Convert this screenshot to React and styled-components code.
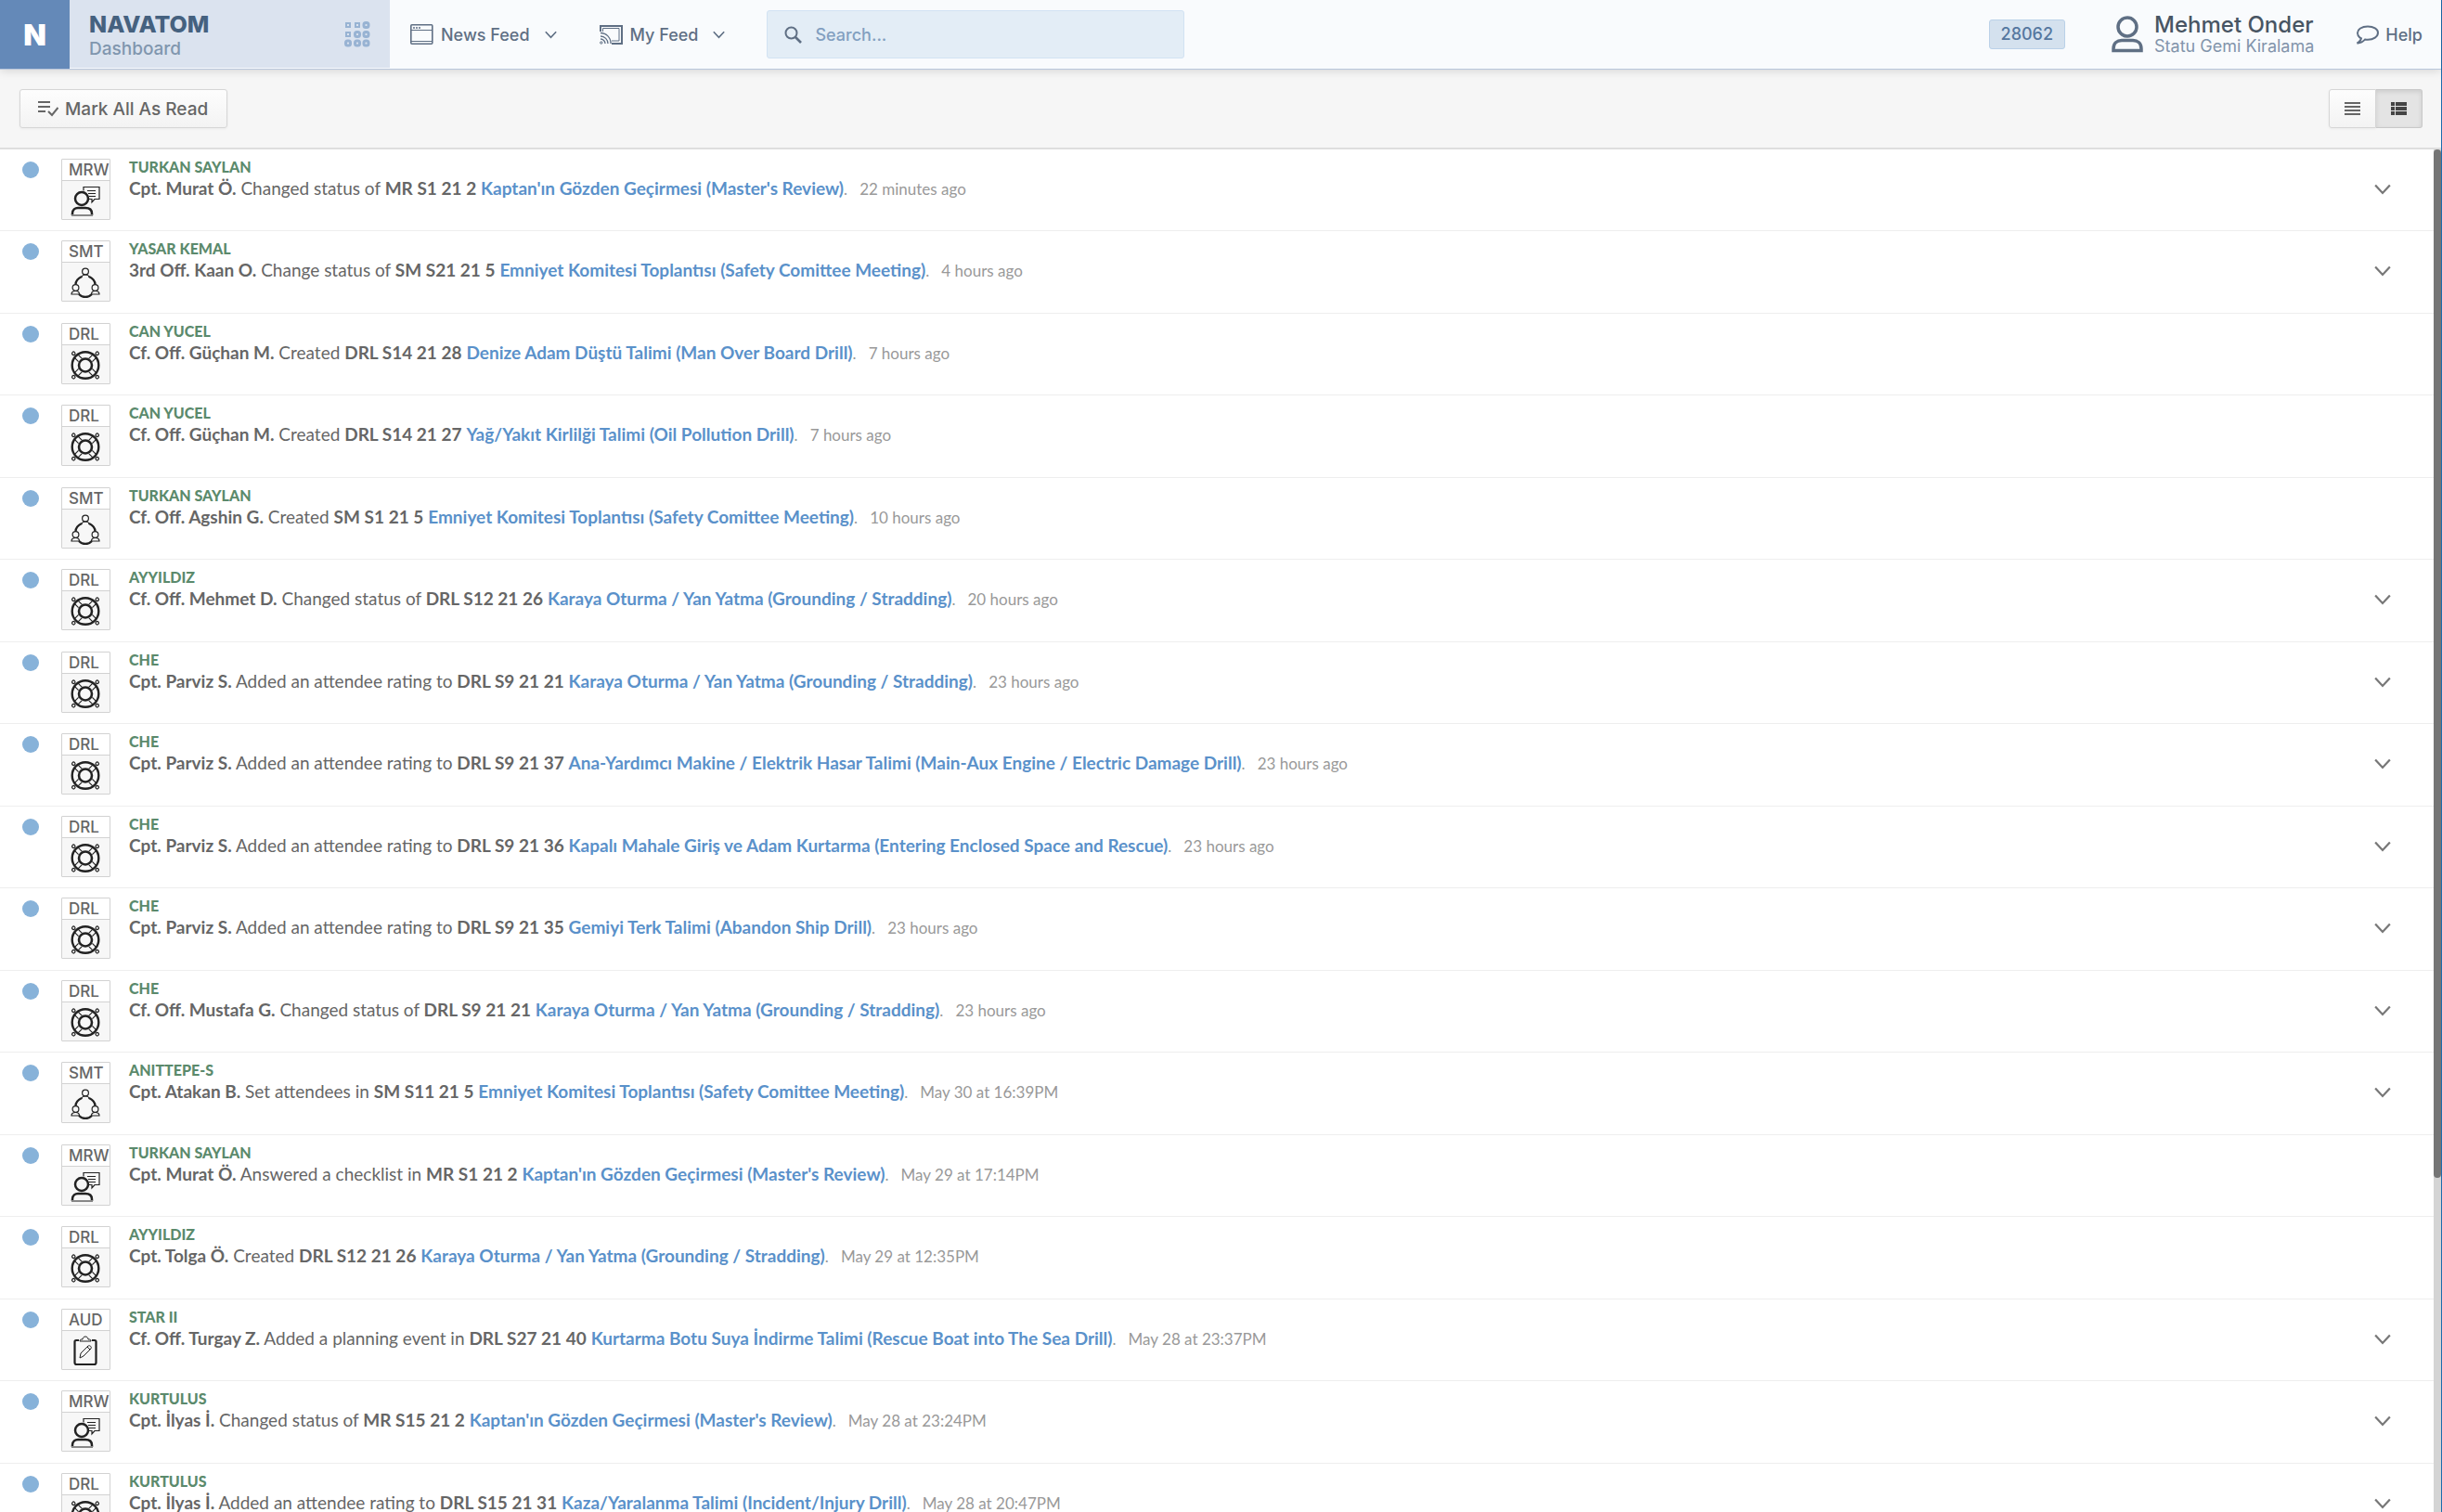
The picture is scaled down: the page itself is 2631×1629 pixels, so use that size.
import React from "react";
import styled, { createGlobalStyle } from "styled-components";

const GlobalStyle = createGlobalStyle`
    * {
        box-sizing: border-box;
    }

    html,
    body {
        margin: 0;
        height: 100%;
        overflow: hidden;
        font-family: Lato, "Liberation Sans", sans-serif;
    }

    #root {
        height: 100%;
    }

    button,
    input {
        font-family: inherit;
    }
`;

const uiFont = `Inter, "Liberation Sans", sans-serif`;

const Page = styled.div`
    height: 100vh;
    display: flex;
    flex-direction: column;
    background: #fff;
    border-right: 1px solid #1c6cae;
`;

const Header = styled.header`
    position: relative;
    z-index: 1;
    display: flex;
    flex: none;
    height: 75px;
    background: #f9fbfd;
    border-bottom: 1px solid #b9c7dc;
    box-shadow: 0 1px 10px rgba(0, 0, 0, 0.15);
    font-family: ${uiFont};
    color: #5f6f84;
`;

const Logo = styled.a`
    width: 75px;
    display: flex;
    align-items: center;
    justify-content: center;
    background: #6489b8;
    color: #fff;
    font-size: 32px;
    font-weight: 900;
    text-decoration: none;
`;

const Brand = styled.div`
    width: 345px;
    display: flex;
    align-items: center;
    justify-content: space-between;
    padding: 0 21px 0 21px;
    margin-bottom: 1px;
    background: #dbe3ef;
`;

const BrandText = styled.div`
    padding-top: 4px;
`;

const BrandName = styled.h1`
    margin: 0;
    font-size: 25px;
    line-height: 28px;
    font-weight: 800;
    color: #45617f;
`;

const BrandPage = styled.div`
    font-size: 19px;
    line-height: 26px;
    font-weight: 500;
    color: #8096ae;
`;

const IconButton = styled.button`
    display: flex;
    align-items: center;
    padding: 0;
    border: 0;
    background: none;
    color: inherit;
`;

const Nav = styled.nav`
    display: flex;
    align-items: center;
    gap: 46px;
    padding: 0 45px 0 22px;
`;

const NavButton = styled(IconButton)`
    gap: 8px;
    font-size: 18px;
    font-weight: 500;

    svg:last-child {
        margin-left: 8px;
    }
`;

const Search = styled.label`
    align-self: center;
    display: flex;
    align-items: center;
    gap: 14px;
    width: 450px;
    height: 52px;
    padding: 0 18px;
    background: #e3edf6;
    border: 1px solid #d2e2f3;
    border-radius: 3px;

    input {
        flex: 1;
        padding: 0;
        border: 0;
        outline: 0;
        background: none;
        font-size: 18px;
        font-weight: 500;
    }

    input::placeholder {
        color: #829fc0;
        opacity: 1;
    }
`;

const Account = styled.div`
    display: flex;
    align-items: center;
    margin-left: auto;
    padding-right: 20px;
`;

const Counter = styled.span`
    padding: 0 12px;
    margin-right: 50px;
    line-height: 30px;
    font-size: 18px;
    font-weight: 500;
    color: #55779f;
    background: #d4e1ee;
    border: 1px solid #bad1e8;
    border-radius: 3px;
`;

const UserName = styled.div`
    margin-left: 12px;
    font-size: 24px;
    line-height: 26px;
    font-weight: 500;
    color: #485563;
`;

const Company = styled.div`
    margin-left: 12px;
    font-size: 18px;
    line-height: 20px;
    color: #8294ab;
`;

const Help = styled.a`
    display: flex;
    align-items: center;
    gap: 7px;
    margin-left: 45px;
    font-size: 18px;
    font-weight: 500;
    color: inherit;
    text-decoration: none;
`;

const Toolbar = styled.div`
    display: flex;
    flex: none;
    align-items: center;
    justify-content: space-between;
    height: 86px;
    padding: 0 20px 0 21px;
    background: #f6f6f6;
    border-bottom: 2px solid #dedede;
    font-family: ${uiFont};
`;

const ToolButton = styled.button`
    display: flex;
    align-items: center;
    justify-content: center;
    gap: 7px;
    height: 42px;
    padding: 0 20px 0 19px;
    font-size: 19px;
    font-weight: 500;
    color: #666;
    background: linear-gradient(#fdfdfd, #f3f3f3);
    border: 1px solid #d6d6d6;
    border-radius: 3px;
    box-shadow: 0 1px 3px rgba(0, 0, 0, 0.05);
`;

const Toggle = styled.div`
    display: flex;
`;

const ToggleButton = styled(ToolButton)`
    width: 51px;
    padding: 0;
    border-radius: 3px 0 0 3px;

    &[aria-pressed="true"] {
        width: 50px;
        color: #444;
        background: #e4e4e4;
        border-left: 0;
        border-color: #c8c8c8;
        border-radius: 0 3px 3px 0;
        box-shadow: inset 0 2px 5px rgba(0, 0, 0, 0.1);
    }
`;

const Feed = styled.div`
    display: flex;
    flex: 1;
    min-height: 0;
`;

const List = styled.ul`
    flex: 1;
    margin: 0;
    padding: 0;
    overflow: hidden;
    list-style: none;
`;

const Row = styled.li`
    display: flex;
    align-items: flex-start;
    height: 88px;
    padding: 10px 46px 12px 24px;
    border-bottom: 1px solid #eee;

    &:nth-child(even) {
        height: 89px;
    }
`;

const Unread = styled.span`
    flex: none;
    width: 18px;
    height: 18px;
    margin: 3px 24px 0 0;
    border-radius: 50%;
    background: #87b2d9;
`;

const Badge = styled.div`
    flex: none;
    width: 53px;
    height: 66px;
    margin-right: 20px;
    overflow: hidden;
    background: #f7f7f7;
    border: 1px solid #d2d2d2;
    border-radius: 1px;
    color: #222;

    svg {
        display: block;
        margin: 5px 0 0 9px;
    }
`;

const BadgeCode = styled.div`
    height: 23px;
    padding-left: 7px;
    line-height: 23px;
    font-family: ${uiFont};
    font-size: 17px;
    font-weight: 500;
    color: #666;
    background: #fff;
    border-bottom: 1px solid #d2d2d2;
`;

const Body = styled.div`
    flex: 1;
    color: #666;
`;

const Vessel = styled.div`
    font-size: 16px;
    line-height: 17px;
    font-weight: 900;
    color: #5b8a6c;
`;

const Message = styled.p`
    margin: 0;
    font-size: 19px;
    line-height: 29px;
`;

const Subject = styled.a`
    font-weight: 700;
    color: #5a91ca;
    text-decoration: none;
`;

const Time = styled.span`
    font-size: 17px;
    color: #999;
`;

const ExpandButton = styled(IconButton)`
    align-self: center;
    color: #777;
`;

const Track = styled.div`
    width: 8px;
    background: #d4d4d4;
`;

const Thumb = styled.div`
    height: 1108px;
    border-radius: 4px;
    background: #757575;
`;

const Chevron = ({ size = 13 }) => (
    <svg width={size} height={size} viewBox="0 0 16 16" fill="none" stroke="currentColor" strokeWidth="2">
        <path d="M1 4l7 7.500 7-7.500" />
    </svg>
);

const AppsIcon = () => (
    <svg width="28" height="28" viewBox="0 0 28 28" fill="none" stroke="#98b3d3" strokeWidth="2">
        <rect x="2" y="2" width="4" height="4" />
        <rect x="12" y="2" width="4" height="4" />
        <g strokeWidth="3">
            <rect x="21" y="1.500" width="5" height="5" rx="2" />
            <rect x="11.500" y="11.500" width="5" height="5" rx="2" />
            <rect x="21" y="11.500" width="5" height="5" rx="2" />
            <rect x="1.500" y="21" width="5" height="5" rx="2" />
            <rect x="11.500" y="21" width="5" height="5" rx="2" />
            <rect x="21" y="21" width="5" height="5" rx="2" />
        </g>
        <rect x="2" y="12" width="4" height="4" />
    </svg>
);

const WindowIcon = () => (
    <svg width="25" height="22" viewBox="0 0 25 22" fill="none" stroke="currentColor">
        <rect x="0.8" y="0.8" width="23" height="20.4" rx="1" strokeWidth="1.6" />
        <path d="M1 6.500h23M1 18.500h23" />
        <path d="M3 4h2M6 4h2M9 4h2" strokeWidth="1.6" />
    </svg>
);

const CastIcon = () => (
    <svg width="25" height="21" viewBox="0 0 25 21" fill="none" stroke="currentColor">
        <path d="M1 7V1h23v19H13" strokeWidth="2" />
        <path d="M3.500 7V3.500h17.500v13.500h-8" />
        <path d="M1 8.500a11 11 0 0 1 11 11.500M1 12a8 8 0 0 1 8 8M1 15a5 5 0 0 1 5 5" strokeWidth="1.3" />
        <circle cx="1.8" cy="19" r="1.2" />
    </svg>
);

const SearchIcon = () => (
    <svg width="19" height="19" viewBox="0 0 19 19" fill="none" stroke="#5f6f84" strokeWidth="2">
        <circle cx="7.5" cy="7.5" r="6" />
        <path d="M12 12l6 6" strokeWidth="2.6" />
    </svg>
);

const UserIcon = () => (
    <svg width="34" height="40" viewBox="0 0 34 40" fill="none" stroke="currentColor" strokeWidth="3.500">
        <circle cx="17" cy="12" r="10" />
        <path d="M2 37.500v-2c0-6 4-9 9-9h12c5 0 9 3 9 9v2z" />
    </svg>
);

const HelpIcon = () => (
    <svg width="25" height="21" viewBox="0 0 25 21" fill="none" stroke="currentColor" strokeWidth="2">
        <path d="M13 1.500C6.500 1.500 2 4.500 2 8.500c0 2.500 1.500 4.500 4 5.800-.5 2.200-2 4-4.500 5.200 4 0 6.500-1.500 8.500-4 1 .2 2 .3 3 .3 6.200 0 11-3.300 11-7.500s-4.800-6.800-11-6.800z" />
    </svg>
);

const ReadIcon = () => (
    <svg width="22" height="18" viewBox="0 0 22 18" fill="none" stroke="currentColor" strokeWidth="2">
        <path d="M0 2h13M0 7h13M0 12h8" />
        <path d="M11 12l4 4 6.500-8" />
    </svg>
);

const LinesIcon = () => (
    <svg width="17" height="14" viewBox="0 0 17 14" stroke="currentColor" strokeWidth="2">
        <path d="M0 1h17M0 5h17M0 9h17M0 13h17" />
    </svg>
);

const DetailIcon = () => (
    <svg width="17" height="14" viewBox="0 0 17 14" stroke="currentColor" strokeWidth="4">
        <path d="M0 2h4M5 2h12M0 7h4M5 7h12M0 12h4M5 12h12" />
    </svg>
);

const icons = {
    MRW: (
        <>
            <path d="M14 5.500V1.500h17v13h-5l-3 3.500v-3.500h-4M18 5.500h9M19 8.500h8M20 11.500h7" strokeWidth="1.2" />
            <circle cx="12" cy="14" r="7" strokeWidth="2.5" />
            <path d="M2 32v-2c0-4 3-6 6-6h8c4 0 7 2 7 6v2" strokeWidth="2.5" />
            <path d="M1 32h23" stroke="#888" strokeWidth="2" />
        </>
    ),
    SMT: (
        <>
            <path d="M12 10C8 12 5.500 15 5.500 18.500M20 10c4 2 6.500 5 6.500 8.500M9 29c4 4 10 4 14 0" strokeWidth="2.4" />
            <circle cx="16" cy="4.500" r="3.400" strokeWidth="1.200" />
            <circle cx="5.500" cy="22" r="3.400" strokeWidth="1.200" />
            <circle cx="26.500" cy="22" r="3.400" strokeWidth="1.200" />
            <path d="M12 11c0-2 2-3 4-3s4 1 4 3M1 29c0-2.500 2-3.500 4.500-3.500s4 1 4 3.500zM22.500 29c0-2.500 2-3.500 4-3.500s4.500 1 4.500 3.500z" strokeWidth="1.2" />
        </>
    ),
    DRL: (
        <>
            <circle cx="16" cy="16.500" r="14.300" strokeWidth="2.400" />
            <circle cx="16" cy="16.500" r="7" strokeWidth="2.600" />
            {[45, 135, 225, 315].map(angle => (
                <g key={angle} transform={`rotate(${angle} 16 16.500)`} strokeWidth="1.2">
                    <path d="M24 14h6M24 19h6" />
                    <circle cx="34" cy="16.500" r="1.700" />
                </g>
            ))}
        </>
    ),
    AUD: (
        <>
            <path d="M9 5H6q-1.500 0-1.500 1.500v22.500q0 2 2 2h19q2 0 2-2V6.500Q27.500 5 26 5h-3" strokeWidth="2.200" />
            <path d="M10 6c0-2 1-2 3-2 0-4 6-4 6 0 2 0 3 0 3 2z" />
            <path d="M10 24l1-5 8-8c2-1 4 1 3 3l-8 8zM18 12l3 3" />
        </>
    )
};

const BadgeIcon = ({ code }) => (
    <svg width="32" height="33" viewBox="0 0 32 33" fill="none" stroke="currentColor">
        {icons[code]}
    </svg>
);

const review = "Kaptan'ın Gözden Geçirmesi (Master's Review)";
const meeting = "Emniyet Komitesi Toplantısı (Safety Comittee Meeting)";
const grounding = "Karaya Oturma / Yan Yatma (Grounding / Stradding)";

const items = [
    ["MRW", "TURKAN SAYLAN", "Cpt. Murat Ö.", "Changed status of", "MR S1 21 2", review, "22 minutes ago", true],
    ["SMT", "YASAR KEMAL", "3rd Off. Kaan O.", "Change status of", "SM S21 21 5", meeting, "4 hours ago", true],
    ["DRL", "CAN YUCEL", "Cf. Off. Güçhan M.", "Created", "DRL S14 21 28", "Denize Adam Düştü Talimi (Man Over Board Drill)", "7 hours ago", false],
    ["DRL", "CAN YUCEL", "Cf. Off. Güçhan M.", "Created", "DRL S14 21 27", "Yağ/Yakıt Kirlilği Talimi (Oil Pollution Drill)", "7 hours ago", false],
    ["SMT", "TURKAN SAYLAN", "Cf. Off. Agshin G.", "Created", "SM S1 21 5", meeting, "10 hours ago", false],
    ["DRL", "AYYILDIZ", "Cf. Off. Mehmet D.", "Changed status of", "DRL S12 21 26", grounding, "20 hours ago", true],
    ["DRL", "CHE", "Cpt. Parviz S.", "Added an attendee rating to", "DRL S9 21 21", grounding, "23 hours ago", true],
    ["DRL", "CHE", "Cpt. Parviz S.", "Added an attendee rating to", "DRL S9 21 37", "Ana-Yardımcı Makine / Elektrik Hasar Talimi (Main-Aux Engine / Electric Damage Drill)", "23 hours ago", true],
    ["DRL", "CHE", "Cpt. Parviz S.", "Added an attendee rating to", "DRL S9 21 36", "Kapalı Mahale Giriş ve Adam Kurtarma (Entering Enclosed Space and Rescue)", "23 hours ago", true],
    ["DRL", "CHE", "Cpt. Parviz S.", "Added an attendee rating to", "DRL S9 21 35", "Gemiyi Terk Talimi (Abandon Ship Drill)", "23 hours ago", true],
    ["DRL", "CHE", "Cf. Off. Mustafa G.", "Changed status of", "DRL S9 21 21", grounding, "23 hours ago", true],
    ["SMT", "ANITTEPE-S", "Cpt. Atakan B.", "Set attendees in", "SM S11 21 5", meeting, "May 30 at 16:39PM", true],
    ["MRW", "TURKAN SAYLAN", "Cpt. Murat Ö.", "Answered a checklist in", "MR S1 21 2", review, "May 29 at 17:14PM", false],
    ["DRL", "AYYILDIZ", "Cpt. Tolga Ö.", "Created", "DRL S12 21 26", grounding, "May 29 at 12:35PM", false],
    ["AUD", "STAR II", "Cf. Off. Turgay Z.", "Added a planning event in", "DRL S27 21 40", "Kurtarma Botu Suya İndirme Talimi (Rescue Boat into The Sea Drill)", "May 28 at 23:37PM", true],
    ["MRW", "KURTULUS", "Cpt. İlyas İ.", "Changed status of", "MR S15 21 2", review, "May 28 at 23:24PM", true],
    ["DRL", "KURTULUS", "Cpt. İlyas İ.", "Added an attendee rating to", "DRL S15 21 31", "Kaza/Yaralanma Talimi (Incident/Injury Drill)", "May 28 at 20:47PM", true]
];

const FeedRow = ({ item }) => {
    const [code, vessel, person, action, record, subject, time, expandable] = item;
    return (
        <Row>
            <Unread />
            <Badge>
                <BadgeCode>{code}</BadgeCode>
                <BadgeIcon code={code} />
            </Badge>
            <Body>
                <Vessel>{vessel}</Vessel>
                <Message>
                    <b>{person}</b> {action} <b>{record}</b> <Subject href="#">{subject}</Subject>
                    <Time>. &nbsp; {time}</Time>
                </Message>
            </Body>
            {expandable && (
                <ExpandButton aria-label="Expand">
                    <Chevron size={18} />
                </ExpandButton>
            )}
        </Row>
    );
};

const App = () => (
    <Page>
        <GlobalStyle />
        <Header>
            <Logo href="#">N</Logo>
            <Brand>
                <BrandText>
                    <BrandName>NAVATOM</BrandName>
                    <BrandPage>Dashboard</BrandPage>
                </BrandText>
                <IconButton aria-label="Apps">
                    <AppsIcon />
                </IconButton>
            </Brand>
            <Nav>
                <NavButton>
                    <WindowIcon />
                    News Feed
                    <Chevron />
                </NavButton>
                <NavButton>
                    <CastIcon />
                    My Feed
                    <Chevron />
                </NavButton>
            </Nav>
            <Search>
                <SearchIcon />
                <input type="text" placeholder="Search..." aria-label="Search" />
            </Search>
            <Account>
                <Counter>28062</Counter>
                <UserIcon />
                <div>
                    <UserName>Mehmet Onder</UserName>
                    <Company>Statu Gemi Kiralama</Company>
                </div>
                <Help href="#">
                    <HelpIcon />
                    Help
                </Help>
            </Account>
        </Header>
        <Toolbar>
            <ToolButton>
                <ReadIcon />
                Mark All As Read
            </ToolButton>
            <Toggle>
                <ToggleButton aria-label="Compact list" aria-pressed="false">
                    <LinesIcon />
                </ToggleButton>
                <ToggleButton aria-label="Detailed list" aria-pressed="true">
                    <DetailIcon />
                </ToggleButton>
            </Toggle>
        </Toolbar>
        <Feed>
            <List>
                {items.map((item, i) => (
                    <FeedRow key={i} item={item} />
                ))}
            </List>
            <Track>
                <Thumb />
            </Track>
        </Feed>
    </Page>
);

export default App;
